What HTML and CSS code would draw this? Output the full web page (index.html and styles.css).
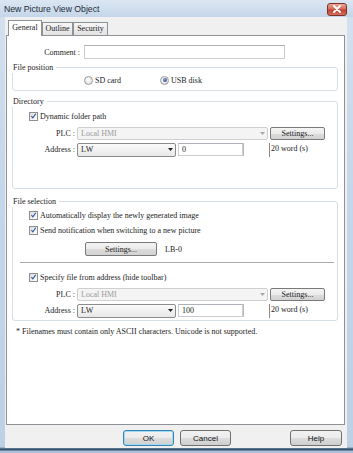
FILE: index.html
```html
<!DOCTYPE html>
<html>
<head>
<meta charset="utf-8">
<link rel="stylesheet" href="styles.css">
</head>
<body>
<div class="window">
  <div class="titlebar">
    <span class="title">New Picture View Object</span>
    <span class="close"><svg width="10" height="8" viewBox="0 0 10 8"><path d="M2 1 L8 7 M8 1 L2 7" stroke="#fff" stroke-width="1.8" stroke-linecap="round"/></svg></span>
  </div>
  <div class="client">
    <div class="tabs">
      <span class="tab active">General</span>
      <span class="tab t-outline">Outline</span>
      <span class="tab t-security">Security</span>
    </div>
    <div class="panel">
      <div class="row comment-row">
        <span class="lbl-comment">Comment :</span>
        <span class="input comment-input"></span>
      </div>

      <div class="group g-pos">
        <span class="legend">File position</span>
        <div class="row radio-row">
          <span class="opt"><span class="radio"></span><span>SD card</span></span>
          <span class="opt"><span class="radio on"></span><span>USB disk</span></span>
        </div>
      </div>

      <div class="group g-dir">
        <span class="legend">Directory</span>
        <div class="row check-row r-dyn">
          <span class="check"><svg width="9" height="9" viewBox="0 0 9 9"><path d="M1.8 4.6 L3.7 6.8 L7.4 1.6" fill="none" stroke="#2f5aa8" stroke-width="1.5"/></svg></span>
          <span>Dynamic folder path</span>
        </div>
        <div class="row field-row r-plc">
          <span class="lbl">PLC :</span>
          <span class="select disabled plc-sel"><span class="val">Local HMI</span><span class="arrow"><svg width="5" height="3" viewBox="0 0 5 3"><path d="M0 0 H5 L2.5 3 Z" fill="#a8a8a8"/></svg></span></span>
          <span class="btn settings">Settings...</span>
        </div>
        <div class="row field-row r-addr">
          <span class="lbl">Address :</span>
          <span class="select addr-sel"><span class="val">LW</span><span class="arrow"><svg width="5" height="3" viewBox="0 0 5 3"><path d="M0 0 H5 L2.5 3 Z" fill="#222"/></svg></span></span>
          <span class="input num-input">0</span>
          <span class="spacer-field"></span>
          <span class="words">20 word (s)</span>
        </div>
      </div>

      <div class="group g-sel">
        <span class="legend">File selection</span>
        <div class="row check-row r-auto">
          <span class="check"><svg width="9" height="9" viewBox="0 0 9 9"><path d="M1.8 4.6 L3.7 6.8 L7.4 1.6" fill="none" stroke="#2f5aa8" stroke-width="1.5"/></svg></span>
          <span>Automatically display the newly generated image</span>
        </div>
        <div class="row check-row r-send">
          <span class="check"><svg width="9" height="9" viewBox="0 0 9 9"><path d="M1.8 4.6 L3.7 6.8 L7.4 1.6" fill="none" stroke="#2f5aa8" stroke-width="1.5"/></svg></span>
          <span>Send notification when switching to a new picture</span>
        </div>
        <div class="row set-row">
          <span class="btn settings-wide">Settings...</span>
          <span class="lb">LB-0</span>
        </div>
        <div class="sep"></div>
        <div class="row check-row r-spec">
          <span class="check"><svg width="9" height="9" viewBox="0 0 9 9"><path d="M1.8 4.6 L3.7 6.8 L7.4 1.6" fill="none" stroke="#2f5aa8" stroke-width="1.5"/></svg></span>
          <span>Specify file from address (hide toolbar)</span>
        </div>
        <div class="row field-row r-plc2">
          <span class="lbl">PLC :</span>
          <span class="select disabled plc-sel"><span class="val">Local HMI</span><span class="arrow"><svg width="5" height="3" viewBox="0 0 5 3"><path d="M0 0 H5 L2.5 3 Z" fill="#a8a8a8"/></svg></span></span>
          <span class="btn settings">Settings...</span>
        </div>
        <div class="row field-row r-addr2">
          <span class="lbl">Address :</span>
          <span class="select addr-sel"><span class="val">LW</span><span class="arrow"><svg width="5" height="3" viewBox="0 0 5 3"><path d="M0 0 H5 L2.5 3 Z" fill="#222"/></svg></span></span>
          <span class="input num-input">100</span>
          <span class="spacer-field"></span>
          <span class="words">20 word (s)</span>
        </div>
      </div>

      <div class="note">* Filenames must contain only ASCII characters. Unicode is not supported.</div>
    </div>
    <div class="buttons">
      <span class="dbtn ok">OK</span>
      <span class="dbtn cancel">Cancel</span>
      <span class="dbtn help">Help</span>
    </div>
  </div>
</div>
</body>
</html>
```

FILE: styles.css
```css
html, body {
  margin: 0;
  padding: 0;
  width: 353px;
  height: 453px;
  overflow: hidden;
}
body {
  font-family: "Liberation Serif", "Times New Roman", serif;
  font-size: 8px;
  color: #1c1c1c;
}
.window {
  box-sizing: border-box;
  width: 353px;
  height: 453px;
  display: flex;
  flex-direction: column;
  padding: 0 6px 5px 5px;
  background: linear-gradient(to bottom, #d4e1ef 0, #c4d6ea 200px, #bcd0e6 447px, #35536f 449px, #35536f 450px, #a9bfd7 451px);
}
.titlebar {
  height: 17px;
  margin: 0 -6px 0 -5px;
  padding: 0 6px 0 4px;
  display: flex;
  align-items: center;
  background: linear-gradient(to bottom, #dbe6f2, #c5d6ea);
}
.title {
  font-family: "Liberation Sans", Arial, sans-serif;
  font-size: 8.7px;
  color: #1e2a38;
}
.close {
  margin-left: auto;
  box-sizing: border-box;
  width: 20px;
  height: 13px;
  margin-top: 1px;
  border: 1px solid #7d3228;
  border-radius: 3px;
  background: linear-gradient(to bottom, #eaa99a 0, #d46a58 45%, #c2402f 55%, #d3705c 100%);
  display: flex;
  align-items: center;
  justify-content: center;
}
.client {
  flex: 1;
  display: flex;
  flex-direction: column;
  background: #f0f0f0;
  padding: 0 2px 0 1px;
}
.tabs {
  display: flex;
  align-items: flex-end;
  margin-top: 3px;
  padding-left: 2px;
}
.tab {
  box-sizing: border-box;
  height: 13px;
  border: 1px solid #8e9196;
  border-bottom: none;
  background: linear-gradient(to bottom, #f6f6f6, #e2e2e2);
  display: flex;
  align-items: center;
  justify-content: center;
  line-height: 10px;
}
.tab.active {
  width: 34px;
  height: 16px;
  margin-bottom: -1px;
  background: #fff;
  position: relative;
  z-index: 1;
  padding-bottom: 2px;
}
.t-outline { width: 31px; margin-left: 0; }
.t-security { width: 35px; margin-left: 0; }
.panel {
  box-sizing: border-box;
  height: 390px;
  border: 1px solid #8e9196;
  background: #fff;
  padding: 9px 6px 0 5px;
}
.row {
  display: flex;
  align-items: center;
}
.comment-row {
  height: 14px;
}
.lbl-comment {
  width: 68px;
  margin-right: 4px;
  text-align: right;
}
.input {
  box-sizing: border-box;
  height: 14px;
  background: #fff;
  border: 1px solid #c9cdd2;
  border-top-color: #aeb2b8;
  display: flex;
  align-items: center;
  padding-left: 3px;
}
.comment-input {
  width: 201px;
}
.group {
  border: 1px solid #d7dee4;
  border-radius: 3px;
}
.legend {
  display: block;
  width: fit-content;
  height: 11px;
  line-height: 11px;
  margin: -6px 0 0 -1px;
  padding: 0 3px 0 1px;
  background: #fff;
}
.g-pos {
  margin-top: 8px;
  padding-bottom: 4px;
}
.radio-row {
  height: 12px;
  margin-top: 1px;
  padding-left: 71px;
}
.opt {
  width: 76px;
  display: flex;
  align-items: center;
  gap: 2px;
}
.radio {
  box-sizing: border-box;
  width: 9px;
  height: 9px;
  border-radius: 50%;
  border: 1px solid #9a9a9a;
  background: radial-gradient(circle at 50% 40%, #ffffff 0, #e4e4e4 70%, #cfcfcf 100%);
  display: flex;
  align-items: center;
  justify-content: center;
}
.radio.on::after {
  content: "";
  width: 4px;
  height: 4px;
  border-radius: 50%;
  background: radial-gradient(circle at 40% 35%, #7fa0d6 0, #2a4a8c 80%);
}
.g-dir {
  margin-top: 10px;
  padding-bottom: 32px;
}
.check-row {
  height: 12px;
  padding-left: 16px;
  gap: 2px;
}
.check {
  box-sizing: border-box;
  width: 9px;
  height: 9px;
  border: 1px solid #8f8f8f;
  background: linear-gradient(135deg, #dcdcdc, #ffffff);
  display: flex;
  align-items: center;
  justify-content: center;
}
.check svg {
  width: 8px;
  height: 8px;
}
.r-dyn { margin-top: 3px; }
.field-row {
  height: 13px;
}
.r-plc { margin-top: 5px; }
.r-addr { margin-top: 3px; }
.lbl {
  width: 62px;
  margin-right: 2px;
  text-align: right;
}
.select {
  box-sizing: border-box;
  height: 13px;
  display: flex;
  align-items: center;
  border: 1px solid #8b8b8b;
  border-radius: 2px;
  background: linear-gradient(to bottom, #fafafa, #e8e8e8);
  padding-left: 3px;
}
.select .val { flex: 1; }
.select .arrow {
  width: 8px;
  display: flex;
  align-items: center;
  justify-content: center;
  margin-right: 1px;
}
.plc-sel {
  width: 191px;
  border-color: #cfcfcf;
  background: #f4f4f4;
  color: #9a9a9a;
}
.addr-sel {
  width: 99px;
  height: 14px;
  font-weight: bold;
  color: #222;
}
.addr-sel .val { font-weight: normal; letter-spacing: 0.5px; }
.btn {
  box-sizing: border-box;
  height: 13px;
  border: 1px solid #7a7a7a;
  border-radius: 2px;
  background: linear-gradient(to bottom, #f4f4f4 0, #ebebeb 50%, #dcdcdc 51%, #d2d2d2 100%);
  display: flex;
  align-items: center;
  justify-content: center;
}
.settings {
  width: 55px;
  margin-left: 2px;
}
.num-input {
  width: 65px;
  height: 13px;
  margin-left: 2px;
}
.spacer-field {
  box-sizing: border-box;
  width: 26px;
  height: 13px;
  border-left: 1px solid #b9b9b9;
}
.words {
  border-left: 1px solid #8a8a8a;
  height: 14px;
  line-height: 11px;
  padding-left: 1px;
  align-self: flex-start;
}
.g-sel {
  margin-top: 12px;
  padding-bottom: 3px;
}
.r-auto { margin-top: 2px; }
.r-send { margin-top: 3px; }
.set-row {
  height: 14px;
  margin-top: 6px;
  padding-left: 72px;
}
.settings-wide {
  width: 72px;
  height: 14px;
}
.lb {
  margin-left: 8px;
}
.sep {
  margin: 6px 3px 0 7px;
  height: 0;
  border-top: 1px solid #a8a8a8;
  border-bottom: 1px solid #ffffff;
}
.r-spec { margin-top: 7px; }
.r-plc2 { margin-top: 5px; }
.r-addr2 { margin-top: 3px; }
.note {
  margin: 6px 0 0 4px;
  height: 10px;
  line-height: 10px;
}
.buttons {
  display: flex;
  margin-top: 5px;
  padding: 0 3px 0 117px;
}
.dbtn {
  box-sizing: border-box;
  width: 51px;
  height: 16px;
  border: 1px solid #707070;
  border-radius: 3px;
  background: linear-gradient(to bottom, #f2f2f2 0, #ebebeb 50%, #dddddd 51%, #cfcfcf 100%);
  display: flex;
  align-items: center;
  justify-content: center;
  font-family: "Liberation Sans", Arial, sans-serif;
  font-size: 8px;
  color: #111;
}
.ok {
  border-color: #3c7fb1;
  box-shadow: inset 0 0 0 1px #9ddcf7;
}
.cancel { margin-left: 6px; }
.help { margin-left: auto; width: 52px; }
```
